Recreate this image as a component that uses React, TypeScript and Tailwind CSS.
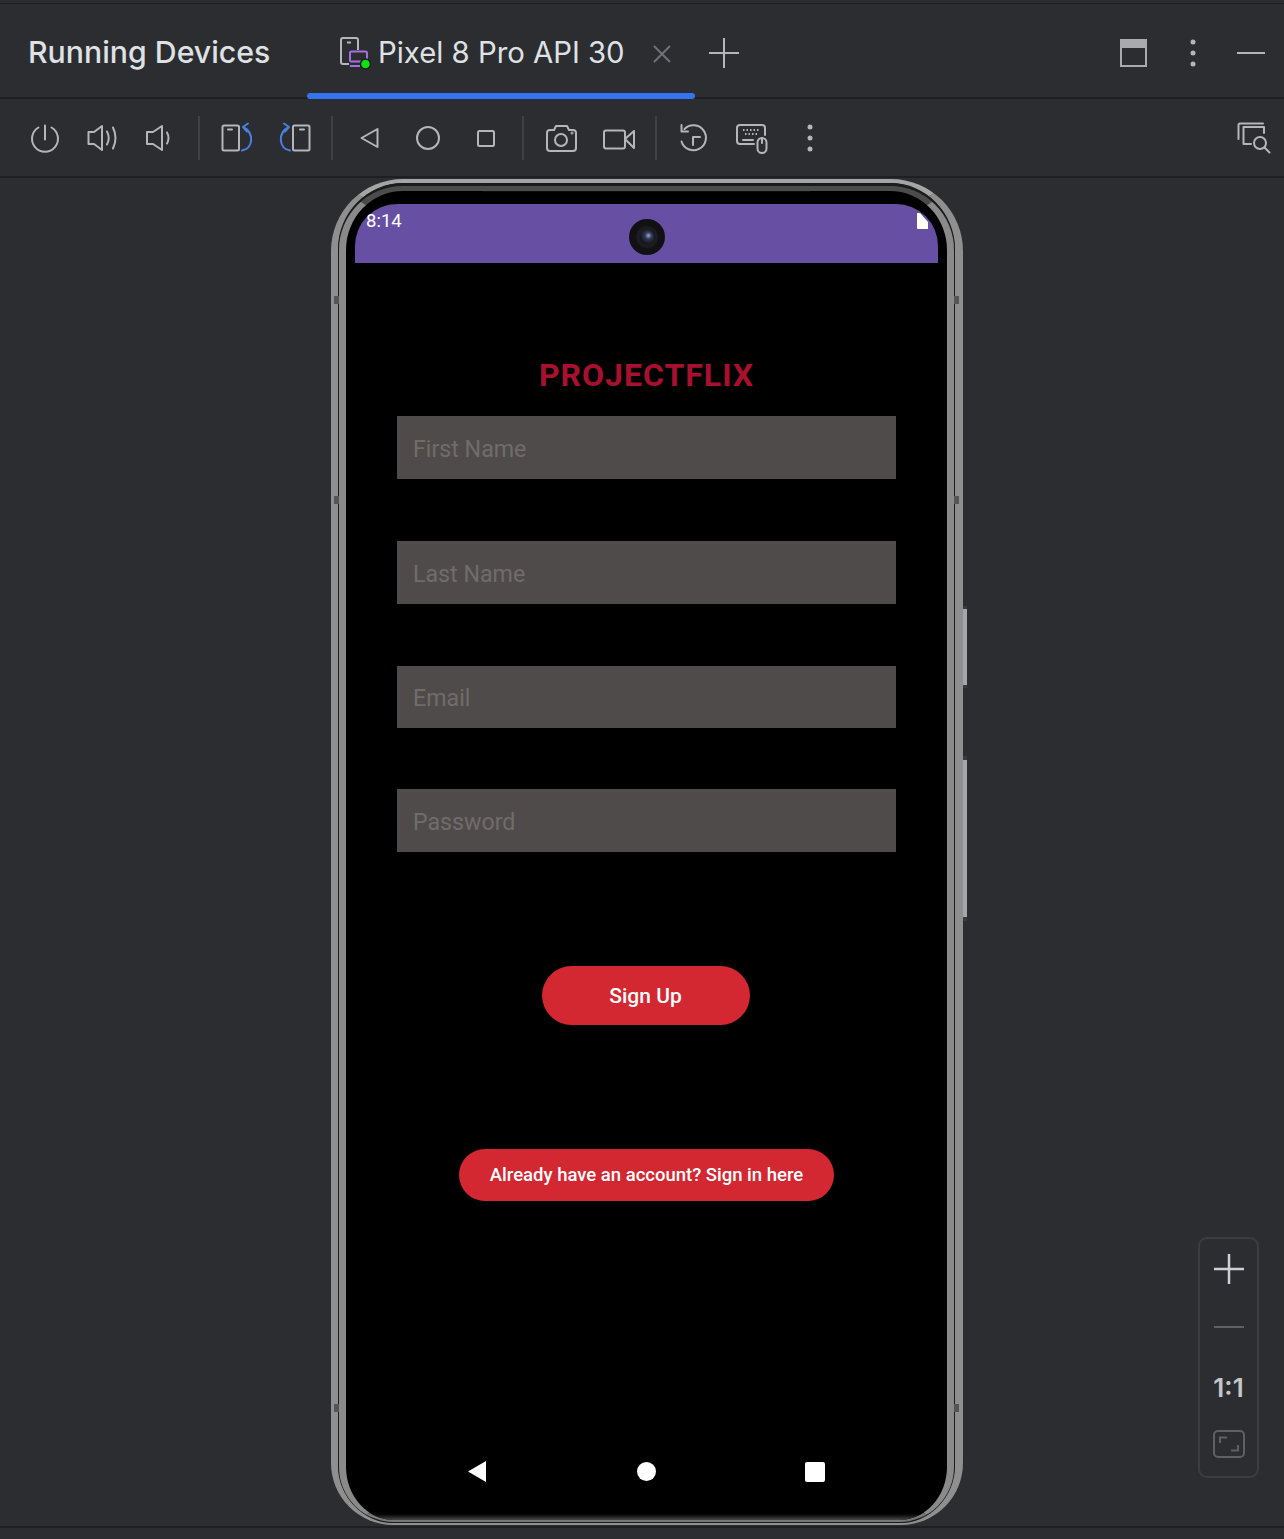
import React from 'react';

const BLUE = '#4a80e4';

const Cell = ({ children }: { children: React.ReactNode }) => (
  <div className="w-[58px] h-[32px] flex justify-center shrink-0">{children}</div>
);

const Ico = ({ children, color = '#b4b6ba', w = 32, h = 32 }: { children: React.ReactNode; color?: string; w?: number; h?: number }) => (
  <svg width={w} height={h} viewBox={`0 0 ${w} ${h}`} fill="none" stroke={color} strokeWidth="2" strokeLinejoin="round" strokeLinecap="round" className="overflow-visible">
    {children}
  </svg>
);

const Sep = ({ w }: { w: string }) => (
  <div className={`${w} flex justify-center shrink-0`}>
    <div className="w-[2px] h-[44px] bg-[#3f4145]" />
  </div>
);

const RotateDevice = ({ mirror }: { mirror?: boolean }) => (
  <Ico>
    <g transform={mirror ? 'translate(32,0) scale(-1,1)' : undefined}>
      <rect x="1.5" y="3.5" width="16.5" height="25" rx="1.5" />
      <path d="M7 7.5h4" />
      <path d="M21 28.500C32 27 34 11 22 5M27 1.500L22 5l4 4.500" stroke={BLUE} />
    </g>
  </Ico>
);

const Toolbar = () => (
  <div className="h-[77px] flex items-center pl-[16px] pr-[13px] pt-[1px]">
    <Cell>
      <Ico>
        <path d="M9.500 5.500a13 13 0 1 0 13 0M16 3.500v14" />
      </Ico>
    </Cell>
    <Cell>
      <Ico>
        <path d="M1.500 10H7l8-6v24l-8-6H1.500zM20 9.500q3.500 6.500 0 13M26 5.500q5 10.500 0 21" />
      </Ico>
    </Cell>
    <Cell>
      <Ico>
        <path d="M2 10h6l9-6v24l-9-6H2zM22 10.500q3 5.500 0 11" />
      </Ico>
    </Cell>
    <Sep w="w-[18px]" />
    <Cell>
      <RotateDevice />
    </Cell>
    <Cell>
      <RotateDevice mirror />
    </Cell>
    <Sep w="w-[16px]" />
    <Cell>
      <Ico>
        <path d="M8.500 16l16-9v18z" />
      </Ico>
    </Cell>
    <Cell>
      <Ico>
        <circle cx="17" cy="16" r="11" />
      </Ico>
    </Cell>
    <Cell>
      <Ico>
        <rect x="9" y="9" width="16" height="15" rx="1.500" />
      </Ico>
    </Cell>
    <Sep w="w-[18px]" />
    <Cell>
      <Ico>
        <path d="M5 8h4l2-4h11l2 4h4a3 3 0 0 1 3 3v15a3 3 0 0 1-3 3H5a3 3 0 0 1-3-3V11a3 3 0 0 1 3-3z" />
        <circle cx="16" cy="18" r="6" />
        <circle cx="27" cy="11" r="0.5" />
      </Ico>
    </Cell>
    <Cell>
      <Ico>
        <rect x="1" y="8.500" width="21" height="18" rx="2" />
        <path d="M22 17l9-8v17z" />
      </Ico>
    </Cell>
    <Sep w="w-[16px]" />
    <Cell>
      <Ico>
        <path d="M7.500 7a12.500 12.500 0 1 1-3 12.500M4.500 3v6.500H11M16 23v-8h7" />
      </Ico>
    </Cell>
    <Cell>
      <Ico>
        <path d="M19 22H5a3 3 0 0 1-3-3V6a3 3 0 0 1 3-3h22a3 3 0 0 1 3 3v7" />
        <rect x="22.500" y="16" width="9" height="15" rx="4.500" />
        <path d="M27 16v5M8 18h10" />
        <path d="M8 8h16M10 12h12" strokeDasharray="1.500 2" strokeLinecap="butt" />
      </Ico>
    </Cell>
    <Cell>
      <Ico>
        <g fill="#b4b6ba" stroke="none">
          <circle cx="17" cy="5" r="2.500" />
          <circle cx="17" cy="16" r="2.500" />
          <circle cx="17" cy="27" r="2.500" />
        </g>
      </Ico>
    </Cell>
    <div className="ml-auto">
      <Ico w={34}>
        <path d="M1.500 17V3q0-1.500 1.500-1.500h23M27 11V5H6.500v17H14" />
        <circle cx="23" cy="21" r="6" />
        <path d="M27.500 25.500l5 5" />
      </Ico>
    </div>
  </div>
);

const Header = () => (
  <div className="h-[93px] flex items-center pl-[28px] pr-[19px] pt-[5px] font-['Inter',sans-serif]">
    <span className="text-[30.250px] font-medium text-[#dfe1e5] w-[242px] whitespace-nowrap">Running Devices</span>
    <div className="relative ml-[37px] w-[388px] h-full flex items-center pl-[33px]">
      <svg width="34" height="34" viewBox="0 0 34 34" fill="none" className="shrink-0 mt-[2px] overflow-visible">
        <path d="M9 27H3a2 2 0 0 1-2-2V3a2 2 0 0 1 2-2h13a2 2 0 0 1 2 2v10" stroke="#b4b6ba" strokeWidth="2" />
        <path d="M7 5.500h4" stroke="#b4b6ba" strokeWidth="2" />
        <rect x="10" y="14.500" width="17" height="10" rx="1.500" stroke="#a66fe0" strokeWidth="2" />
        <path d="M10 29h10" stroke="#a66fe0" strokeWidth="2" />
        <circle cx="25.500" cy="27" r="5" fill="#0fe00f" stroke="#1e1f22" strokeWidth="1.500" />
      </svg>
      <span className="ml-[4px] text-[29.300px] text-[#dfe1e5] whitespace-nowrap">Pixel 8 Pro API 30</span>
      <svg width="18" height="18" viewBox="0 0 18 18" stroke="#6f7176" strokeWidth="2" className="absolute left-[346px] top-[36px]">
        <path d="M1 1l16 16M17 1L1 17" />
      </svg>
      <div className="absolute left-0 right-0 bottom-[-2px] h-[6px] rounded-full bg-[#3574f0]" />
    </div>
    <svg width="30" height="30" viewBox="0 0 30 30" stroke="#b4b6ba" strokeWidth="2" className="ml-[14px]">
      <path d="M15 0v30M0 15h30" />
    </svg>
    <div className="ml-auto flex items-center">
      <svg width="27" height="28" viewBox="0 0 27 28" fill="none">
        <rect x="1" y="1" width="25" height="26" stroke="#a8aaad" strokeWidth="2" />
        <rect x="1" y="1" width="25" height="8" fill="#a8aaad" />
      </svg>
      <svg width="6" height="28" viewBox="0 0 6 28" fill="#b4b6ba" className="ml-[43px]">
        <circle cx="3" cy="3" r="2.500" />
        <circle cx="3" cy="14" r="2.500" />
        <circle cx="3" cy="25" r="2.500" />
      </svg>
      <div className="ml-[41px] w-[28px] h-[2px] bg-[#b4b6ba]" />
    </div>
  </div>
);

const Field = ({ placeholder, className }: { placeholder: string; className: string }) => (
  <input
    placeholder={placeholder}
    className={`w-[499px] bg-[#4f4b4a] px-[16px] pt-[2px] text-[23.200px] font-['Roboto',sans-serif] text-white placeholder:text-[#6f6c6b] outline-none ${className}`}
  />
);

const Phone = () => (
  <div className="relative w-[632px] h-[1346px] rounded-t-[72px] rounded-b-[62px] border-l-[7px] border-r-[8px] border-t-[4px] border-b-[2px] border-x-[#8f8f8f] border-t-[#a5a5a5] border-b-[#8f8f8f]">
    {/* side buttons */}
    <div className="absolute left-[625px] top-[423px] w-[4px] h-[82px] bg-[#a6a6a6] border-y-[3px] border-[#3a3a3a]" />
    <div className="absolute left-[625px] top-[573px] w-[4px] h-[165px] bg-[#a6a6a6] border-y-[4px] border-[#3a3a3a]" />
    {/* antenna ticks */}
    <div className="absolute left-[-4px] top-[113px] w-[5px] h-[8px] bg-[#555555]" />
    <div className="absolute left-[-4px] top-[313px] w-[5px] h-[8px] bg-[#555555]" />
    <div className="absolute left-[-4px] top-[1221px] w-[5px] h-[8px] bg-[#555555]" />
    <div className="absolute right-[-4px] top-[113px] w-[5px] h-[8px] bg-[#555555]" />
    <div className="absolute right-[-4px] top-[313px] w-[5px] h-[8px] bg-[#555555]" />
    <div className="absolute right-[-4px] top-[1221px] w-[5px] h-[8px] bg-[#555555]" />
    <div className="h-full rounded-t-[66px] rounded-b-[57px] border-x border-t-[3px] border-b border-[#1c1c1c]">
      <div className="relative h-full rounded-t-[64px] rounded-b-[55px] border-x-[7px] border-t-[5px] border-b-[2px] border-x-[#8a8a8a] border-t-[#4c4c4c] border-b-[#777777] bg-black overflow-hidden">
        <div className="absolute left-[137px] top-[-3px] w-[327px] h-[4px] bg-[#0d0d0d]" />
        <div className="relative z-10 h-full rounded-t-[56px] rounded-b-[48px] flex flex-col items-center px-[9px] pt-[13px] font-['Roboto',sans-serif]">
          <div className="relative w-full h-[59px] shrink-0 bg-[#6750a4] rounded-t-[42px] text-white">
            <span className="absolute left-[11px] top-[6px] text-[18.500px] leading-[22px]">8:14</span>
            <svg width="11" height="16" viewBox="0 0 11 16" fill="#ffffff" className="absolute right-[10px] top-[9px]">
              <path d="M0 0h3l8 9v7H1a1 1 0 0 1-1-1z" />
            </svg>
            <svg width="36" height="36" viewBox="0 0 36 36" className="absolute left-[274px] top-[15px]">
              <defs>
                <radialGradient id="lens" cx="0.6" cy="0.4" r="0.7">
                  <stop offset="0" stopColor="#b79ad0" />
                  <stop offset="0.35" stopColor="#2b3a55" />
                  <stop offset="1" stopColor="#0a0a10" />
                </radialGradient>
              </defs>
              <circle cx="18" cy="18" r="18" fill="#111114" />
              <circle cx="18" cy="18" r="11" fill="#1c1c20" />
              <circle cx="18" cy="18" r="7" fill="url(#lens)" />
            </svg>
          </div>
          <h1 className="mt-[93px] h-[38px] text-[32px] leading-[38px] font-bold tracking-[1px] text-[#a8102f] whitespace-nowrap">PROJECTFLIX</h1>
          <Field placeholder="First Name" className="mt-[22px] h-[63px]" />
          <Field placeholder="Last Name" className="mt-[62px] h-[63px]" />
          <Field placeholder="Email" className="mt-[62px] h-[62px]" />
          <Field placeholder="Password" className="mt-[61px] h-[63px]" />
          <button className="mt-[114px] mr-[2px] w-[208px] h-[59px] pt-[2px] rounded-full bg-[#d32732] text-white text-[21px] font-medium">Sign Up</button>
          <button className="mt-[124px] w-[375px] h-[52px] pt-[2px] rounded-full bg-[#d32732] text-white text-[18.500px] font-medium whitespace-nowrap">Already have an account? Sign in here</button>
          <div className="mt-[260px] flex items-center">
            <svg width="18" height="21" viewBox="0 0 18 21" fill="#ffffff">
              <path d="M0 10.500L18 0v21z" />
            </svg>
            <div className="ml-[151px] w-[19px] h-[19px] rounded-full bg-white" />
            <div className="ml-[149px] w-[20px] h-[20px] rounded-[2px] bg-white" />
          </div>
        </div>
        <div className="absolute left-0 right-0 bottom-0 h-[8px] bg-gradient-to-t from-[#4a4a4a] to-black" />
      </div>
    </div>
  </div>
);

const ZoomPanel = () => (
  <div className="absolute left-[1198px] top-[1237px] w-[61px] h-[241px] rounded-[9px] border-2 border-[#3b3d41] flex flex-col items-center pt-[15px]">
    <svg width="30" height="30" viewBox="0 0 30 30" stroke="#ced0d6" strokeWidth="2.500">
      <path d="M15 0v30M0 15h30" />
    </svg>
    <div className="mt-[42px] w-[30px] h-[2px] bg-[#5e6064]" />
    <div className="mt-[44px] text-[26px] leading-[32px] font-semibold text-[#c4c6ca] font-['Inter',sans-serif]">1:1</div>
    <svg width="32" height="28" viewBox="0 0 32 28" fill="none" stroke="#5e6064" strokeWidth="2" className="mt-[26px]">
      <rect x="1" y="1" width="30" height="26" rx="4" />
      <path d="M7 13V7.500h7M25 15v5.500h-7" />
    </svg>
  </div>
);

export default function App() {
  return (
    <div className="relative w-[1284px] h-[1539px] bg-[#2b2d30] overflow-hidden">
      <div className="h-[4px] border-b border-[#1e1f22]" />
      <Header />
      <div className="h-[2px] bg-[#1e1f22]" />
      <Toolbar />
      <div className="h-[2px] bg-[#1e1f22]" />
      <div className="h-[1348px] pl-[331px] pt-[1px]">
        <Phone />
      </div>
      <div className="h-[2px] bg-[#1e1f22]" />
      <ZoomPanel />
    </div>
  );
}
